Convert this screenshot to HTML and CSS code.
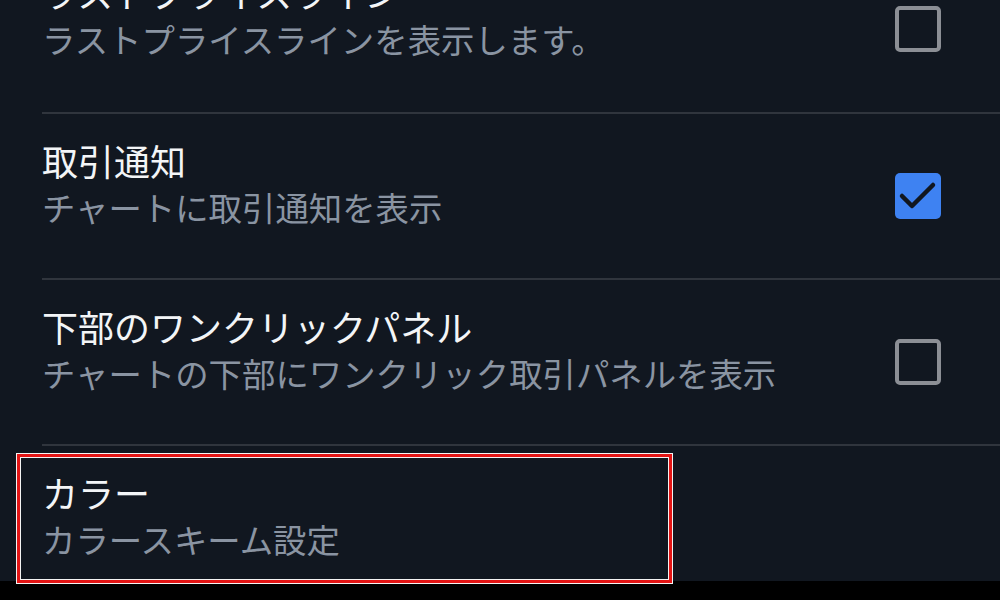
FILE: index.html
```html
<!DOCTYPE html>
<html lang="ja">
<head>
    <meta charset="UTF-8">
    <meta name="viewport" content="width=device-width, initial-scale=1.0">
    <title>チャート設定</title>
    <link rel="stylesheet" href="styles.css">
</head>
<body>
    <main class="settings">
        <div class="setting-row first">
            <div class="setting-text">
                <h2>ラストプライスライン</h2>
                <p>ラストプライスラインを表示します。</p>
            </div>
            <span class="checkbox"></span>
        </div>
        <div class="setting-row">
            <div class="setting-text">
                <h2>取引通知</h2>
                <p>チャートに取引通知を表示</p>
            </div>
            <span class="checkbox checked">
                <svg viewBox="0 0 46 46" width="46" height="46">
                    <path d="M7 23 L17 33 L38 12" fill="none" stroke="#111720" stroke-width="4.5" stroke-linecap="round" stroke-linejoin="round"/>
                </svg>
            </span>
        </div>
        <div class="setting-row">
            <div class="setting-text">
                <h2>下部のワンクリックパネル</h2>
                <p>チャートの下部にワンクリック取引パネルを表示</p>
            </div>
            <span class="checkbox"></span>
        </div>
        <div class="setting-row">
            <div class="setting-text">
                <h2>カラー</h2>
                <p>カラースキーム設定</p>
            </div>
            <!-- highlight around the colour item -->
            <div class="highlight"></div>
        </div>
    </main>
    <div class="nav-bar"></div>
</body>
</html>
```

FILE: styles.css
```css
/* Basic reset */
* {
    box-sizing: border-box;
    margin: 0;
    padding: 0;
}

body {
    width: 1000px;
    height: 600px;
    overflow: hidden;
    position: relative;
    background: #111720;
    font-family: "Noto Sans CJK JP", "Noto Sans", sans-serif;
}

/* Settings list */
.settings {
    display: flex;
    flex-direction: column;
}

.setting-row {
    position: relative;
    display: flex;
    align-items: center;
    height: 166px;
    margin-left: 42px;
    padding-right: 59px;
    border-top: 2px solid #30353d;
}

.setting-row.first {
    margin-top: -54px;
    border-top: none;
}

.setting-text {
    flex: 1;
    align-self: flex-start;
    padding-top: 23px;
}

.setting-text h2 {
    font-size: 36px;
    font-weight: normal;
    line-height: 46px;
    color: #f3f5f7;
}

.setting-text p {
    font-size: 33.4px;
    line-height: 47px;
    color: #8a94a2;
}

/* Checkboxes */
.checkbox {
    width: 46px;
    height: 46px;
    border: 4px solid #8c8f95;
    border-radius: 5px;
    display: flex;
}

.checkbox.checked {
    border: none;
    background: #3e82f2;
}

/* Red highlight box */
.highlight {
    position: absolute;
    z-index: 2;
    left: -26px;
    top: 7px;
    width: 657px;
    height: 131px;
    border: 1px solid #f4f4f4;
    box-shadow: inset 0 0 0 3px #e31414, inset 0 0 0 4px #f4f4f4;
}

/* Bottom system bar */
.nav-bar {
    position: absolute;
    left: 0;
    top: 581px;
    width: 1000px;
    height: 19px;
    background: #000;
}
```
